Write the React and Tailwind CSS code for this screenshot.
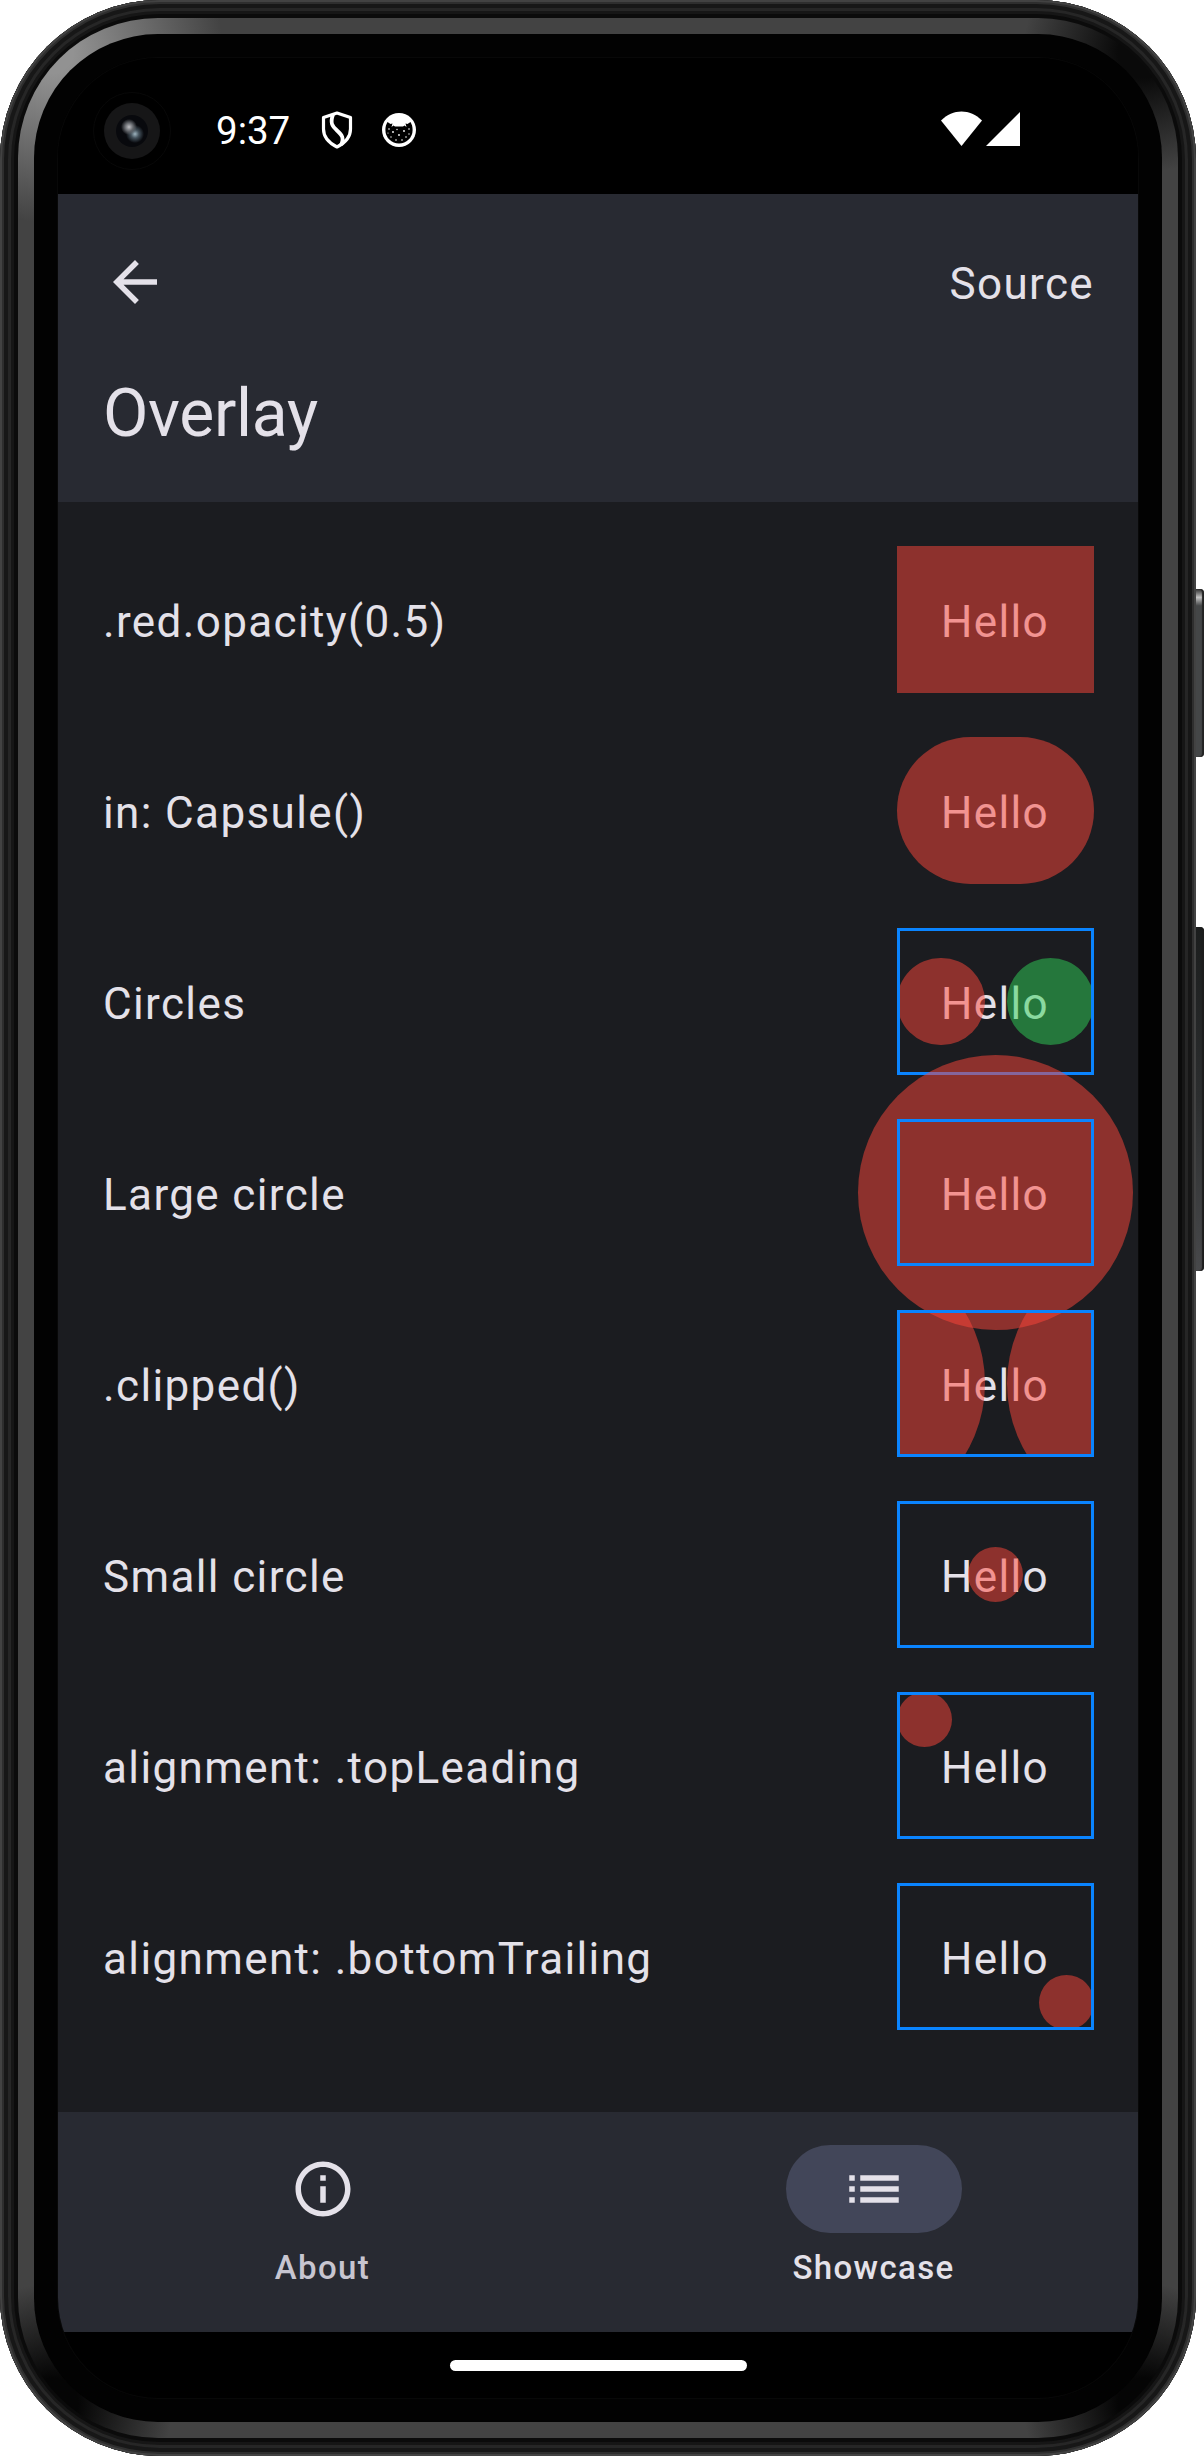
const Box = ({ border = true, children }) => (
  <div className="relative h-[147px] w-[197px] pl-[44px] pt-[43px]">
    Hello
    {children}
    {border && <div className="absolute inset-0 border-[3px] border-[#0a84ff]" />}
  </div>
);

const RED = "absolute bg-[#ff453a]/50";

const rows = [
  [".red.opacity(0.5)", <Box border={false}><div className={`${RED} inset-0`} /></Box>],
  ["in: Capsule()", <Box border={false}><div className={`${RED} inset-0 rounded-full`} /></Box>],
  [
    "Circles",
    <Box>
      <div className="absolute inset-0 flex items-center gap-[22px]">
        <div className="size-[87.5px] rounded-full bg-[#ff453a]/50" />
        <div className="size-[87.5px] rounded-full bg-[#30d158]/50" />
      </div>
    </Box>,
  ],
  ["Large circle", <Box><div className={`${RED} -left-[39px] -top-16 size-[275px] rounded-full`} /></Box>],
  [
    ".clipped()",
    <Box>
      <div className="absolute inset-0 flex items-center justify-center gap-[22px] overflow-hidden">
        <div className="size-[275px] shrink-0 rounded-full bg-[#ff453a]/50" />
        <div className="size-[275px] shrink-0 rounded-full bg-[#ff453a]/50" />
      </div>
    </Box>,
  ],
  ["Small circle", <Box><div className={`${RED} left-[71px] top-[46px] size-[55px] rounded-full`} /></Box>],
  ["alignment: .topLeading", <Box><div className={`${RED} left-0 top-0 size-[55px] rounded-full`} /></Box>],
  ["alignment: .bottomTrailing", <Box><div className={`${RED} bottom-0 right-0 size-[55px] rounded-full`} /></Box>],
];

function StatusBar() {
  return (
    <div className="flex h-[136px] items-center bg-black pl-[158px] pr-[117px] pt-[9px] text-white">
      <span className="w-[105px] pt-px text-[38.5px] leading-none tracking-normal">9:37</span>
      <svg className="-mt-0.5 h-[38px] w-[32px]" viewBox="0 0 32 38" fill="none" stroke="currentColor" strokeWidth="3.200" strokeLinejoin="round">
        <path d="M16 2 29.500 6.500V18c0 7-4.500 13.500-13.500 18C7 31.500 2.500 25 2.500 18V6.500Z" />
        <path d="M12 3.500C9 12 11 15 16 19.500S23.500 27 20 34" strokeWidth="3.800" />
      </svg>
      <svg className="-mt-0.5 ml-[28px] size-[36px]" viewBox="0 0 36 36">
        <circle cx="18" cy="18" r="17" fill="currentColor" />
        <path d="M6.500 10 9.500 12l2-.5L10.500 15l2-1.500 1.500 1h8l1.500-1 2 1.500-1-3.500 2 .5 3-2C31 12.500 31.600 15 31.600 18a13.600 13.600 0 0 1-27.200 0c0-3 .6-5.500 2.100-8Z" fill="#000" />
        <g fill="currentColor">
          <circle cx="8" cy="17" r=".8" /><circle cx="12" cy="20" r=".9" /><circle cx="16" cy="17.500" r=".7" />
          <circle cx="23" cy="19" r=".9" /><circle cx="28" cy="17" r=".8" /><circle cx="18" cy="23" r=".9" />
          <circle cx="10" cy="25" r=".7" /><circle cx="25" cy="25" r=".8" /><circle cx="15" cy="28" r=".8" />
          <circle cx="21" cy="28" r=".8" /><circle cx="28" cy="22" r=".7" /><circle cx="7" cy="21" r=".6" />
        </g>
      </svg>
      <svg className="-mt-1 ml-auto h-[36px] w-[80px]" viewBox="0 0 80 36" fill="currentColor">
        <path d="M0 9.500C12-2.500 29-2.500 41 9.500L20.500 35Z" />
        <path d="M45 35 79 1v34Z" />
      </svg>
    </div>
  );
}

function Header() {
  return (
    <header className="flex h-[308px] flex-col bg-[#282a32] pl-[45px] pr-[44px]">
      <div className="flex h-[176px] items-center justify-between">
        <svg className="ml-[10px] size-[44px]" viewBox="4 4 16 16" fill="currentColor">
          <path d="M20 11H7.830l5.590-5.590L12 4l-8 8 8 8 1.410-1.410L7.830 13H20v-2z" />
        </svg>
        <span className="pt-[4px]">Source</span>
      </div>
      <h1 className="text-[66px] leading-[88px] tracking-[-0.3px]">Overlay</h1>
    </header>
  );
}

function NavBar() {
  return (
    <nav className="flex h-[220px] gap-[22px] bg-[#282a32] text-[33px] font-medium leading-[44px]">
      <div className="flex flex-1 flex-col items-center pt-[33px] text-[#c7c5d0]">
        <div className="grid h-[88px] place-items-center">
          <svg className="size-[66px] text-[#e4e1e9]" viewBox="0 0 24 24" fill="currentColor">
            <path d="M11 7h2v2h-2zm0 4h2v6h-2zm1-9C6.480 2 2 6.480 2 12s4.480 10 10 10 10-4.480 10-10S17.520 2 12 2zm0 18c-4.410 0-8-3.590-8-8s3.590-8 8-8 8 3.590 8 8-3.590 8-8 8z" />
          </svg>
        </div>
        <span className="mt-[13px]">About</span>
      </div>
      <div className="flex flex-1 flex-col items-center pt-[33px]">
        <div className="grid h-[88px] w-[176px] place-items-center rounded-full bg-[#424659]">
          <svg className="size-[66px]" viewBox="0 0 24 24" fill="currentColor">
            <path d="M3 13h2v-2H3v2zm0 4h2v-2H3v2zm0-8h2V7H3v2zm4 4h14v-2H7v2zm0 4h14v-2H7v2zM7 7v2h14V7H7z" />
          </svg>
        </div>
        <span className="mt-[13px]">Showcase</span>
      </div>
    </nav>
  );
}

export default function App() {
  return (
    <div className="relative h-[2456px] w-[1204px] overflow-hidden bg-white font-[Roboto,sans-serif] text-[44px] leading-[66px] tracking-[1.375px] text-[#e4e1e9]">
      <div className="absolute right-0 top-[589px] h-[168px] w-[10px] rounded-r-[4px] bg-linear-to-b from-[#333] via-[#c4c4c4] via-5% to-[#444647] to-10% shadow-[inset_-2px_0_1px_#222]" />
      <div className="absolute right-0 top-[927px] h-[344px] w-[10px] rounded-r-[4px] bg-linear-to-b from-[#1b1d1d] via-[#2c2e2f] to-[#48494b] shadow-[inset_-2px_0_1px_#1c1c1c]" />
      <div className="relative h-[2456px] w-[1196px] rounded-[160px] bg-[#0b0b0b] p-[18px] shadow-[inset_0_0_0_2px_#424242,inset_0_0_0_4px_#2e2e2e,inset_0_0_0_8px_#171717,inset_0_0_0_11px_#262626,inset_0_0_0_14px_#161616]">
        <div className="h-full rounded-[140px] bg-[radial-gradient(circle_at_35px_35px,#929292_20px,transparent_170px),radial-gradient(circle_at_1125px_35px,#0a0a0a_25px,transparent_120px),radial-gradient(circle_at_35px_2385px,#050505_25px,transparent_120px),radial-gradient(circle_at_1125px_2385px,#050505_25px,transparent_120px)] bg-[#434343] p-[16px]">
          <div className="h-full rounded-[124px] bg-[#020202] p-[24px]">
            <div className="relative flex h-full flex-col overflow-hidden rounded-[100px] bg-black shadow-[0_0_0_1px_#080808]">
              <StatusBar />
              <Header />
              <main className="flex h-[1610px] flex-col gap-[44px] bg-[#1b1c20] pl-[45px] pr-[44px] pt-[44px]">
                {rows.map(([label, demo]) => (
                  <div key={label} className="flex items-center justify-between">
                    <span className="pt-[5px]">{label}</span>
                    {demo}
                  </div>
                ))}
              </main>
              <NavBar />
              <div className="mx-auto mt-[28px] h-[11px] w-[297px] rounded-full bg-white" />
            </div>
          </div>
        </div>
        <div className="absolute left-[104px] top-[103px] grid size-[56px] place-items-center rounded-full bg-[#161617] outline-1 outline-offset-[10px] outline-[#080808]">
          <div className="size-[32px] rounded-full bg-[radial-gradient(circle_at_13px_12px,#c0c0c4_0,#66696e_4px,transparent_8px),radial-gradient(circle_at_19px_19px,#9db3be_0,#44525c_4px,transparent_9px)] bg-[#08090d]" />
        </div>
      </div>
    </div>
  );
}
